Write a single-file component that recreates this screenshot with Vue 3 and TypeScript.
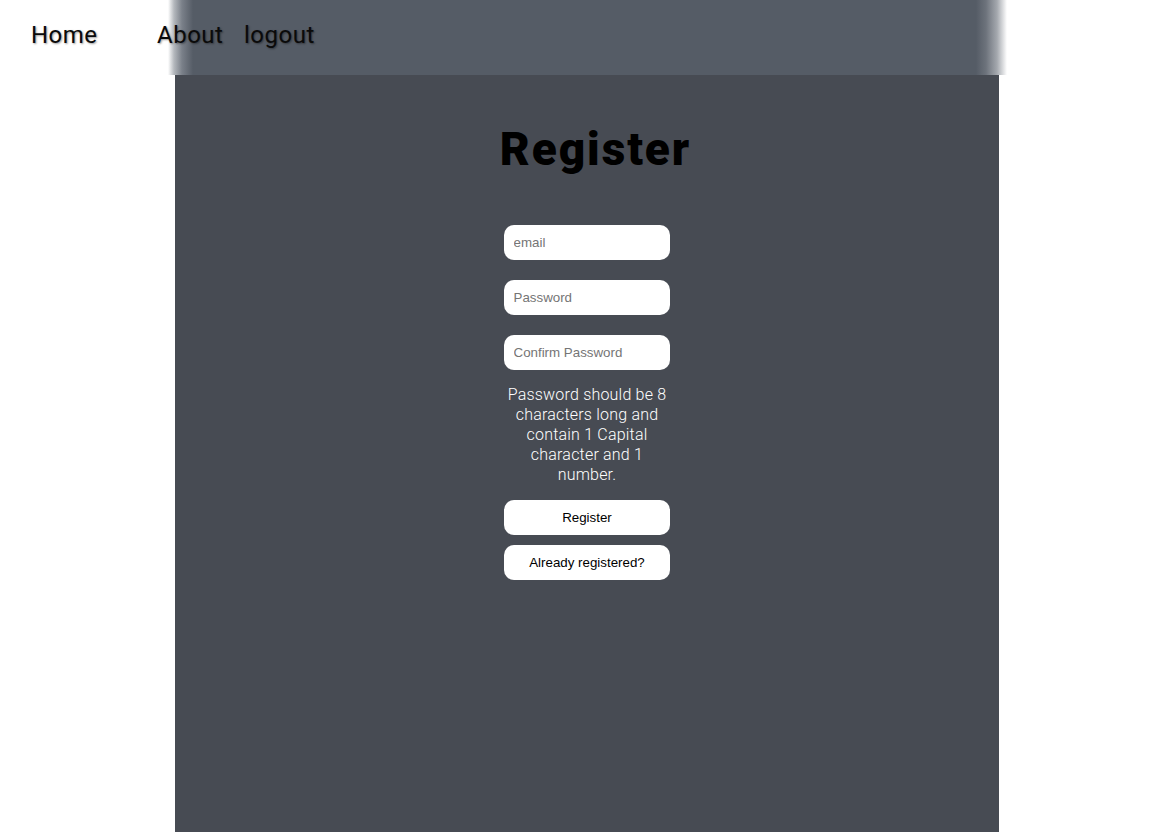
<script setup lang="ts">
const links: { label: string; width: string }[] = [
  { label: 'Home', width: '126px' },
  { label: 'About', width: '87px' },
  { label: 'logout', width: 'auto' },
]
</script>

<template>
  <div class="page">
    <header class="top">
      <nav class="nav">
        <a v-for="l in links" :key="l.label" class="link" :style="{ width: l.width }">{{ l.label }}</a>
      </nav>
    </header>
    <main class="panel">
      <h1 class="title">Register</h1>
      <form class="form" @submit.prevent>
        <input class="field" type="email" placeholder="email" />
        <input class="field" type="password" placeholder="Password" />
        <input class="field last" type="password" placeholder="Confirm Password" />
        <p class="hint">Password should be 8 characters long and contain 1 Capital character and 1 number.</p>
        <button class="btn" type="submit">Register</button>
        <button class="btn second" type="button">Already registered?</button>
      </form>
    </main>
  </div>
</template>

<style>
html, body { margin: 0; background: #fff; }
</style>

<style scoped>
.page {
  width: 1171px;
  height: 832px;
  overflow: hidden;
  display: flex;
  flex-direction: column;
}
.top {
  height: 75px;
  flex: none;
  padding: 0 0 5px 31px;
  box-sizing: border-box;
  display: flex;
  align-items: center;
  background: linear-gradient(90deg, #fff 168px, #b4b8bd 174px, #7a8089 182px, #555c66 193px, #555c66 976px, #6d737c 986px, #a4a8ae 997px, #fff 1007px);
}
.nav { display: flex; }
.link {
  font-family: Roboto, sans-serif;
  font-size: 24px;
  line-height: 30px;
  letter-spacing: 0.5px;
  color: #0a0a0a;
  text-shadow: 1px 1px 2px rgba(0, 0, 0, 0.4);
}
.panel {
  width: 824px;
  margin-left: 175px;
  flex: 1;
  background: #474b53;
  display: flex;
  flex-direction: column;
  align-items: center;
}
.title {
  margin: 44px 0 0 17px;
  height: 106px;
  font-family: Roboto, sans-serif;
  font-size: 46px;
  line-height: 60px;
  font-weight: 900;
  letter-spacing: 1.9px;
  color: #000;
}
.form {
  width: 166px;
  display: flex;
  flex-direction: column;
}
.field {
  box-sizing: border-box;
  width: 166px;
  height: 35px;
  margin-bottom: 20px;
  padding: 0 9.5px;
  border: none;
  border-radius: 10px;
  background: #fff;
  outline: none;
  font-family: "Liberation Sans", sans-serif;
  font-size: 13.33px;
  color: #000;
}
.field.last { margin-bottom: 15px; }
.field::placeholder { color: #757575; opacity: 1; }
.hint {
  margin: 0 0 15px;
  font-family: Roboto, sans-serif;
  font-size: 16px;
  font-weight: 300;
  line-height: 20px;
  letter-spacing: 0.2px;
  text-align: center;
  color: #fff;
}
.btn {
  height: 35px;
  border: none;
  border-radius: 10px;
  background: #fff;
  padding: 0;
  font-family: "Liberation Sans", sans-serif;
  font-size: 13.33px;
  color: #000;
}
.second { margin-top: 10px; }
</style>
